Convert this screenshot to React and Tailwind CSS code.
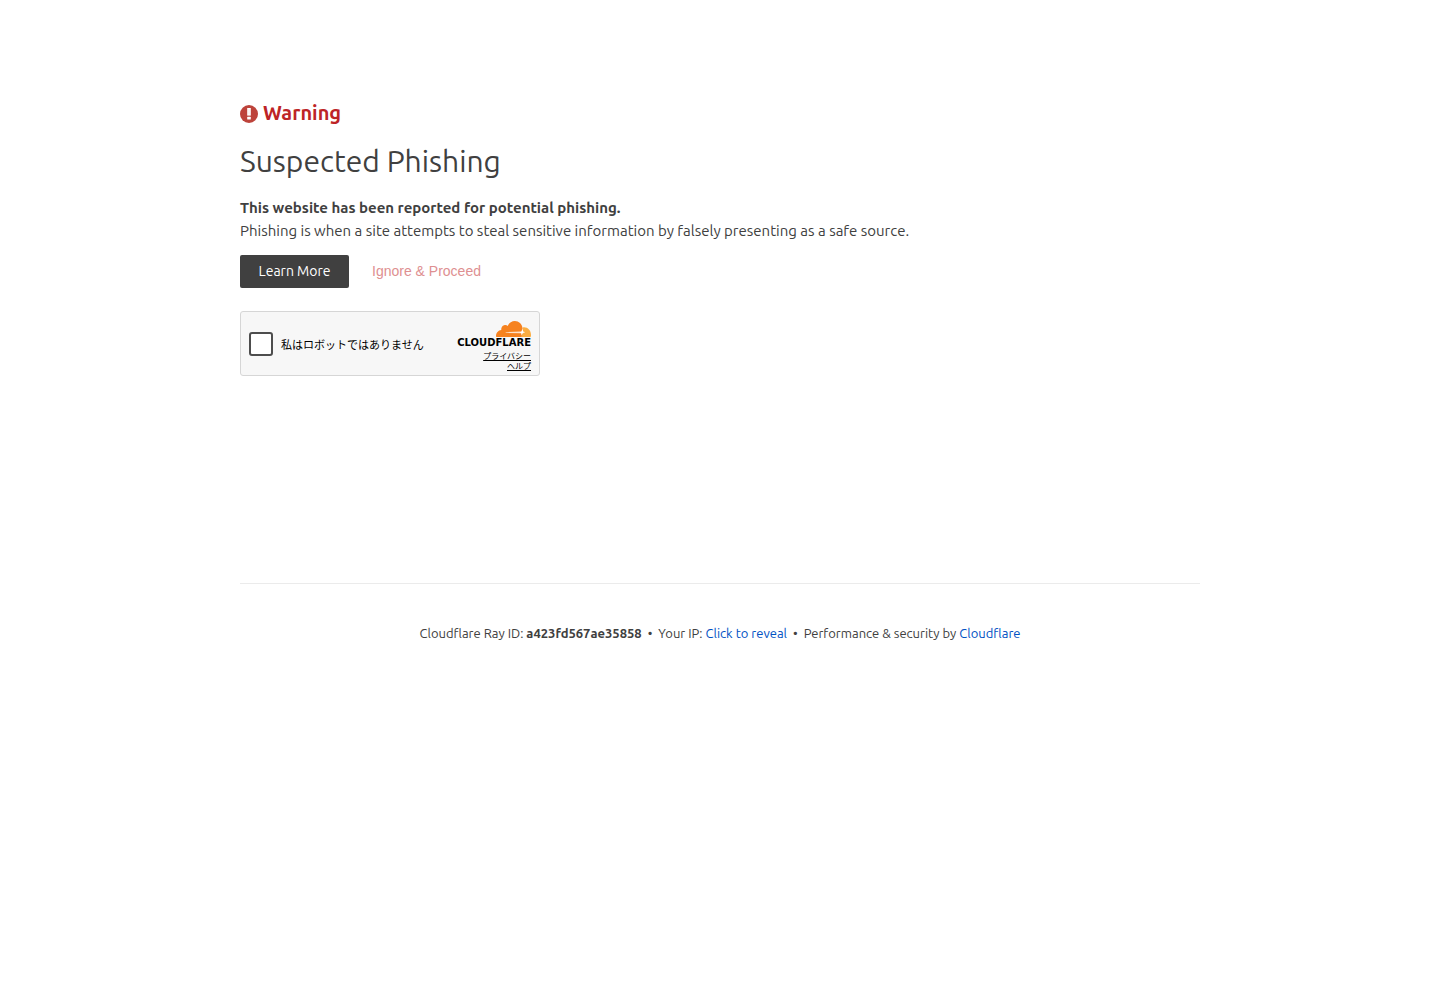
import React, { useState } from "react";

const WarningIcon = () => (
  <svg viewBox="0 0 18 20" className="h-5 w-[18px] shrink-0" aria-hidden="true">
    <circle cx="9" cy="11" r="9" fill="#bd433b" />
    <path d="M7.200 5h3.600v7.600H7.200z" fill="#fff" />
    <rect x="7.200" y="13.800" width="3.600" height="2.800" rx="0.500" fill="#fff" />
    <path d="M8.600 6h.8v5.600h-.8z" fill="#bd433b" opacity="0.15" />
  </svg>
);

const CloudLogo = () => (
  <svg viewBox="0 0 36 17" className="h-[17px] w-9" aria-hidden="true">
    <path
      d="M29.100 7.300c-.4 0-.8 0-1.200.1L26 17h9.400c.2 0 .4-.2.4-.4.1-.5.2-1.100.2-1.700 0-4.300-3.100-7.600-6.900-7.600z"
      fill="#fbad41"
    />
    <path
      d="M27.600 8.300C27 3.800 23.800.9 19.900.9c-3.300 0-6.100 2-7.200 5-1-.8-2.300-1-3.600-.6-2 .6-3.100 2.500-2.800 4.700C3.300 10.200 1 13 1 16.100c0 .5.200.9.600.9h24.700l.8-2.400c.4-1.200.2-2.300-.6-3z"
      fill="#f6821f"
    />
    <path d="M10.500 12.200l15-.6 1.500.9-1 .8-15.300-.5z" fill="#fde2c8" />
    <path d="M27.500 9l.7 2.400 2 .8-2.300.8-1.300 2.500-.5-2.600-1.600-.7 2-.8z" fill="#fff" />
  </svg>
);

const CaptchaBox = ({ checked, onChange }) => {
  return (
    <div className="flex h-[65px] w-full max-w-[300px] justify-between rounded-[3px] border border-[#d6d6d6] bg-[#f7f7f7] px-2 text-black font-['Noto_Sans_CJK_JP',sans-serif]">
      <label className="flex items-center gap-2 text-[11px]">
        <input
          type="checkbox"
          checked={checked}
          onChange={onChange}
          className="h-6 w-6 appearance-none rounded-[3px] border-2 border-[#4d4d4d] bg-white checked:bg-[#f6821f]"
        />
        <span className="pt-[2px]">私はロボットではありません</span>
      </label>
      <div className="flex flex-col items-end pt-2">
        <CloudLogo />
        <span className="font-['DejaVu_Sans',sans-serif] text-[10px] leading-3 font-bold">CLOUDFLARE</span>
        <a href="#privacy" className="mt-[2px] text-[8px] leading-[10px] underline">
          プライバシー
        </a>
        <a href="#help" className="text-[8px] leading-[10px] underline">
          ヘルプ
        </a>
      </div>
    </div>
  );
};

const App = () => {
  const [checked, setChecked] = useState(false);
  const [showIp, setShowIp] = useState(false);

  return (
    <div className="bg-white px-6 pt-[99px] text-[#404040] font-['Ubuntu','Noto_Sans',sans-serif]">
      <div className="mx-auto max-w-[960px]">
        {/* Heading */}
        <header>
          <div className="flex items-center gap-[5px] text-[#bd2426]">
            <WarningIcon />
            <span className="text-xl leading-7 font-semibold">Warning</span>
          </div>
          <h1 className="mt-3 text-[30px] leading-[45px] font-normal">Suspected Phishing</h1>
        </header>

        {/* Message and actions */}
        <main className="mt-3">
          <p className="text-[15px] leading-[23px] font-bold">
            This website has been reported for potential phishing.
          </p>
          <p className="text-[15px] leading-[23px]">
            Phishing is when a site attempts to steal sensitive information by falsely presenting as a safe source.
          </p>
          <div className="mt-[13px] flex items-center gap-[23px] text-sm leading-[21px]">
            <a
              href="#learn-more"
              className="flex h-[33px] w-[109px] items-center justify-center rounded-xs bg-[#404040] text-white"
            >
              Learn More
            </a>
            <button type="submit" className="text-[#de8f91] font-['Liberation_Sans',sans-serif]">
              Ignore &amp; Proceed
            </button>
          </div>
          <div className="mt-[23px]">
            <CaptchaBox checked={checked} onChange={() => setChecked(!checked)} />
          </div>
        </main>

        {/* Footer */}
        <footer className="mt-[207px] border-t border-[#ebebeb] pt-[39px] pb-10 text-center text-[13px] leading-5">
          <span>
            Cloudflare Ray ID: <strong>a423fd567ae35858</strong>
          </span>
          <span className="mx-[6px]">•</span>
          <span>
            Your IP:{" "}
            <button type="button" onClick={() => setShowIp(!showIp)} className="text-[#0051c3]">
              {showIp ? "127.0.0.1" : "Click to reveal"}
            </button>
          </span>
          <span className="mx-[6px]">•</span>
          <span>
            Performance &amp; security by{" "}
            <a href="#cloudflare" className="text-[#0051c3]">
              Cloudflare
            </a>
          </span>
        </footer>
      </div>
    </div>
  );
};

export default App;
